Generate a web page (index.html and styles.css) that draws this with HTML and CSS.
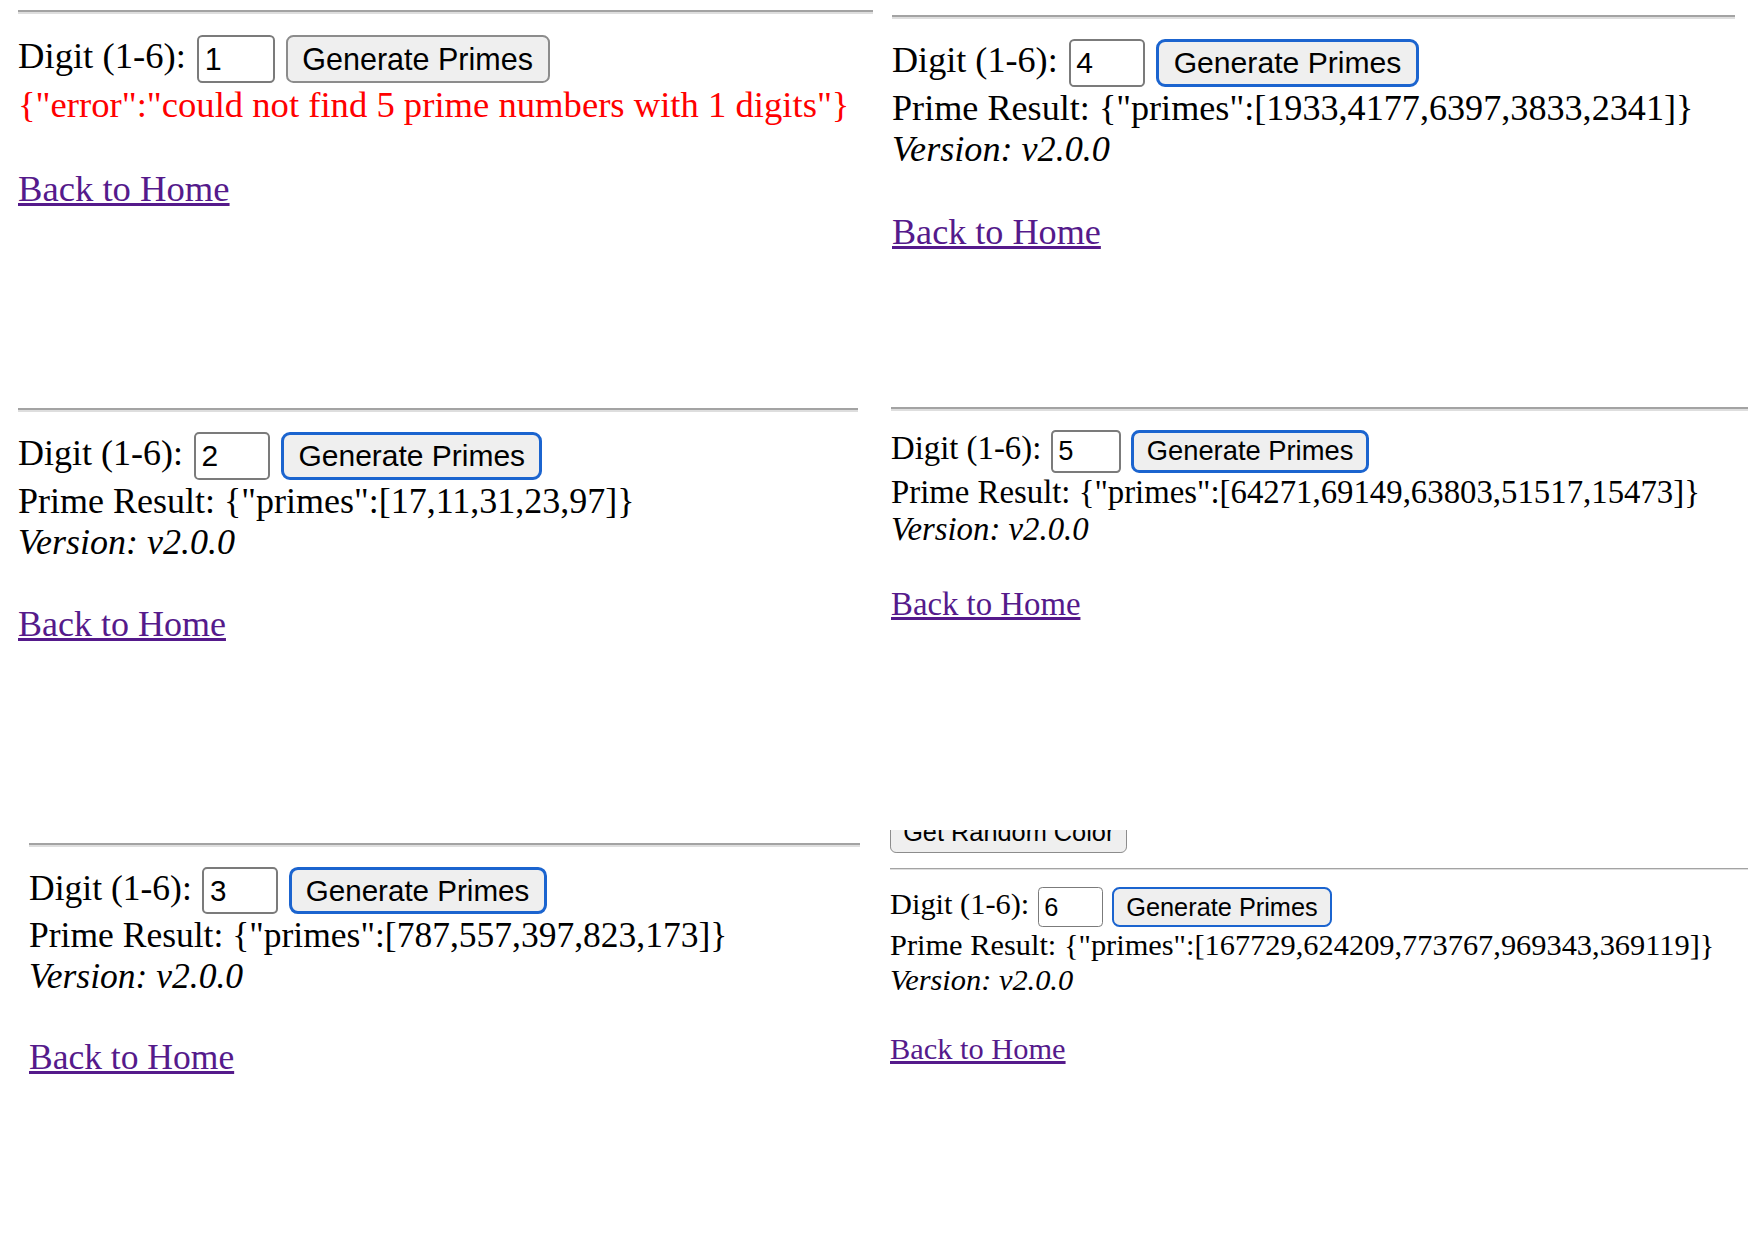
FILE: index.html
```html
<!DOCTYPE html>
<html lang="en">
<head>
<meta charset="utf-8">
<title>Prime Generator screenshots</title>
<link rel="stylesheet" href="styles.css">
</head>
<body>
<main class="collage">
  <div class="col">
    <section class="shot p1">
      <hr class="rule">
      <div class="row">
        <label class="lbl">Digit (1-6):</label>
        <input class="num" type="text" value="1" readonly>
        <button class="btn" type="button">Generate Primes</button>
      </div>
      <p class="line error">{"error":"could not find 5 prime numbers with 1 digits"}</p>
      <a class="home" href="#">Back to Home</a>
    </section>
    <section class="shot p3">
      <hr class="rule">
      <div class="row">
        <label class="lbl">Digit (1-6):</label>
        <input class="num" type="text" value="2" readonly>
        <button class="btn focused" type="button">Generate Primes</button>
      </div>
      <p class="line">Prime Result: {"primes":[17,11,31,23,97]}</p>
      <p class="line"><i>Version: v2.0.0</i></p>
      <a class="home" href="#">Back to Home</a>
    </section>
    <section class="shot p5">
      <hr class="rule">
      <div class="row">
        <label class="lbl">Digit (1-6):</label>
        <input class="num" type="text" value="3" readonly>
        <button class="btn focused" type="button">Generate Primes</button>
      </div>
      <p class="line">Prime Result: {"primes":[787,557,397,823,173]}</p>
      <p class="line"><i>Version: v2.0.0</i></p>
      <a class="home" href="#">Back to Home</a>
    </section>
  </div>
  <div class="col">
    <section class="shot p2">
      <hr class="rule">
      <div class="row">
        <label class="lbl">Digit (1-6):</label>
        <input class="num" type="text" value="4" readonly>
        <button class="btn focused" type="button">Generate Primes</button>
      </div>
      <p class="line">Prime Result: {"primes":[1933,4177,6397,3833,2341]}</p>
      <p class="line"><i>Version: v2.0.0</i></p>
      <a class="home" href="#">Back to Home</a>
    </section>
    <section class="shot p4">
      <hr class="rule">
      <div class="row">
        <label class="lbl">Digit (1-6):</label>
        <input class="num" type="text" value="5" readonly>
        <button class="btn focused" type="button">Generate Primes</button>
      </div>
      <p class="line">Prime Result: {"primes":[64271,69149,63803,51517,15473]}</p>
      <p class="line"><i>Version: v2.0.0</i></p>
      <a class="home" href="#">Back to Home</a>
    </section>
    <section class="shot p6">
      <button class="btn clipped" type="button">Get Random Color</button>
      <hr class="rule spaced">
      <div class="row">
        <label class="lbl">Digit (1-6):</label>
        <input class="num" type="text" value="6" readonly>
        <button class="btn focused" type="button">Generate Primes</button>
      </div>
      <p class="line">Prime Result: {"primes":[167729,624209,773767,969343,369119]}</p>
      <p class="line"><i>Version: v2.0.0</i></p>
      <a class="home" href="#">Back to Home</a>
    </section>
  </div>
</main>
</body>
</html>
```
FILE: styles.css
```css
html, body {
  margin: 0;
  padding: 0;
  background: #ffffff;
}

.collage {
  display: grid;
  grid-template-columns: 876px 872px;
  width: 1748px;
  height: 1240px;
  overflow: hidden;
}

.col {
  display: flex;
  flex-direction: column;
  min-width: 0;
}

.shot {
  flex: none;
  box-sizing: border-box;
  overflow: hidden;
  display: flex;
  flex-direction: column;
  align-items: flex-start;
  font-family: "Liberation Serif", "Times New Roman", serif;
  color: #000000;
  white-space: nowrap;
}

/* each crop is the same page photographed at its own zoom */
.p1 { font-size: 36.64px; height: 392px; padding: 10.4px 3px 0 18px; }
.p3 { font-size: 36px;    height: 428px; padding: 16.2px 18px 0 18px; }
.p5 { font-size: 35.52px; height: 420px; padding: 23.3px 16px 0 29px; }
.p2 { font-size: 36.16px; height: 392px; padding: 15px 13px 0 16px; }
.p4 { font-size: 32.8px;  height: 438px; padding: 15.2px 0 0 15px; }
.p6 { font-size: 30.4px;  height: 410px; padding: 0 0 0 14px; }

.rule {
  align-self: stretch;
  height: 0;
  margin: 0 0 0.5625em 0;
  border: 0;
  border-top: 0.0625em solid #a3a3a3;
  border-bottom: 0.0625em solid #dedede;
}

.rule.spaced {
  margin-top: 0.5em;
}

.row {
  display: flex;
  align-items: center;
  height: 1.3125em;
  margin-bottom: 0.03em;
}

.lbl {
  line-height: normal;
  padding-bottom: 0.17em;
}

.num {
  box-sizing: border-box;
  width: 2.55em;
  height: 1.575em;
  margin: 0 0 0 0.36em;
  padding: 0 0 0 0.19em;
  border: 0.075em solid #7b7b7b;
  border-radius: 0.17em;
  background: #ffffff;
  color: #000000;
  font-family: "Liberation Sans", Arial, sans-serif;
  font-size: 0.8333em;
  outline: none;
}

.btn {
  box-sizing: border-box;
  height: 1.575em;
  margin: 0 0 0 0.36em;
  padding: 0 0.48em;
  border: 0.075em solid #8c8c8c;
  border-radius: 0.24em;
  background: #efefef;
  color: #000000;
  font-family: "Liberation Sans", Arial, sans-serif;
  font-size: 0.8333em;
  line-height: normal;
  white-space: nowrap;
}

.btn.focused {
  border: 0.11em solid #1b64cf;
  border-radius: 0.3em;
}

.btn.clipped {
  margin: -17px 0 0 0;
  flex: none;
}

.line {
  margin: 0;
  line-height: 1.15em;
}

.error {
  color: #ff0000;
}

.home {
  margin-top: 1.13em;
  line-height: 1.15em;
  color: #551a8b;
  text-decoration: underline;
}
```
